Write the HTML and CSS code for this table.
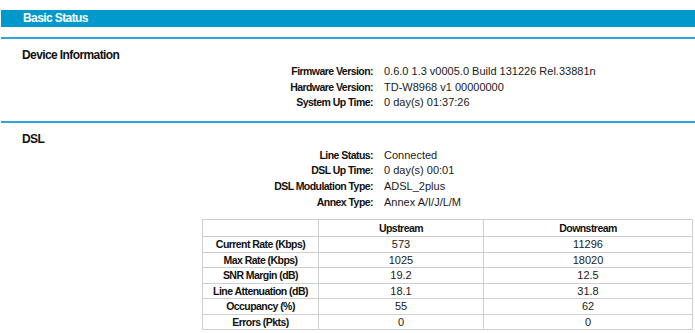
FILE: index.html
```html
<!DOCTYPE html>
<html>
<head>
<meta charset="utf-8">
<link rel="stylesheet" href="styles.css">
</head>
<body>
<div class="page">
  <div class="titlebar">Basic Status</div>
  <div class="rule"></div>
  <section class="block">
    <h2 class="heading">Device Information</h2>
    <div class="info">
      <div class="label">Firmware Version:</div><div class="value">0.6.0 1.3 v0005.0 Build 131226 Rel.33881n</div>
      <div class="label">Hardware Version:</div><div class="value">TD-W8968 v1 00000000</div>
      <div class="label">System Up Time:</div><div class="value">0 day(s) 01:37:26</div>
    </div>
  </section>
  <div class="rule"></div>
  <section class="block">
    <h2 class="heading">DSL</h2>
    <div class="info">
      <div class="label">Line Status:</div><div class="value">Connected</div>
      <div class="label">DSL Up Time:</div><div class="value">0 day(s) 00:01</div>
      <div class="label">DSL Modulation Type:</div><div class="value">ADSL_2plus</div>
      <div class="label">Annex Type:</div><div class="value">Annex A/I/J/L/M</div>
    </div>
    <table class="stats">
      <tr class="head"><th class="c1"></th><th class="c2">Upstream</th><th class="c3">Downstream</th></tr>
      <tr><th>Current Rate (Kbps)</th><td>573</td><td>11296</td></tr>
      <tr><th>Max Rate (Kbps)</th><td>1025</td><td>18020</td></tr>
      <tr><th>SNR Margin (dB)</th><td>19.2</td><td>12.5</td></tr>
      <tr><th>Line Attenuation (dB)</th><td>18.1</td><td>31.8</td></tr>
      <tr><th>Occupancy (%)</th><td>55</td><td>62</td></tr>
      <tr><th>Errors (Pkts)</th><td>0</td><td>0</td></tr>
    </table>
  </section>
</div>
</body>
</html>
```

FILE: styles.css
```css
html, body {
  margin: 0;
  padding: 0;
  background: #ffffff;
}
body {
  font-family: "Liberation Sans", Arial, sans-serif;
  font-size: 11px;
  color: #1a1a1a;
}
.page {
  padding: 10px 0 0 1px;
}
.titlebar {
  height: 17px;
  line-height: 17px;
  background: #0099cc;
  color: #fff;
  font-weight: bold;
  font-size: 12px;
  letter-spacing: -0.6px;
  padding-left: 22px;
}
.rule {
  height: 2px;
  background: #2ea6d8;
  margin-top: 10px;
}
.block {
  padding: 8px 0 0 0;
}
.heading {
  margin: 0 0 1px 21px;
  font-size: 12px;
  letter-spacing: -0.6px;
  font-weight: bold;
  line-height: 16px;
  color: #111;
}
.info {
  display: grid;
  grid-template-columns: 372px auto;
  column-gap: 11px;
  grid-auto-rows: 15.6px;
}
.label {
  text-align: right;
  font-weight: bold;
  font-size: 10.5px;
  letter-spacing: -0.55px;
  line-height: 15.6px;
  color: #111;
}
.value {
  line-height: 15.6px;
}
.stats {
  margin: 9px 0 0 201px;
  width: 491px;
  border-collapse: collapse;
  border: 1px solid #b8b8b8;
}
.stats tr { height: 15.5px; }
.stats tr.head { height: 17px; }
.stats th, .stats td {
  border: 1px solid #d0d0d0;
  padding: 0;
  line-height: 12px;
  text-align: center;
  font-size: 11px;
}
.stats th {
  font-weight: bold;
  font-size: 10.5px;
  letter-spacing: -0.55px;
  color: #111;
}
.c1 { width: 115px; }
.c2 { width: 164px; }
```
